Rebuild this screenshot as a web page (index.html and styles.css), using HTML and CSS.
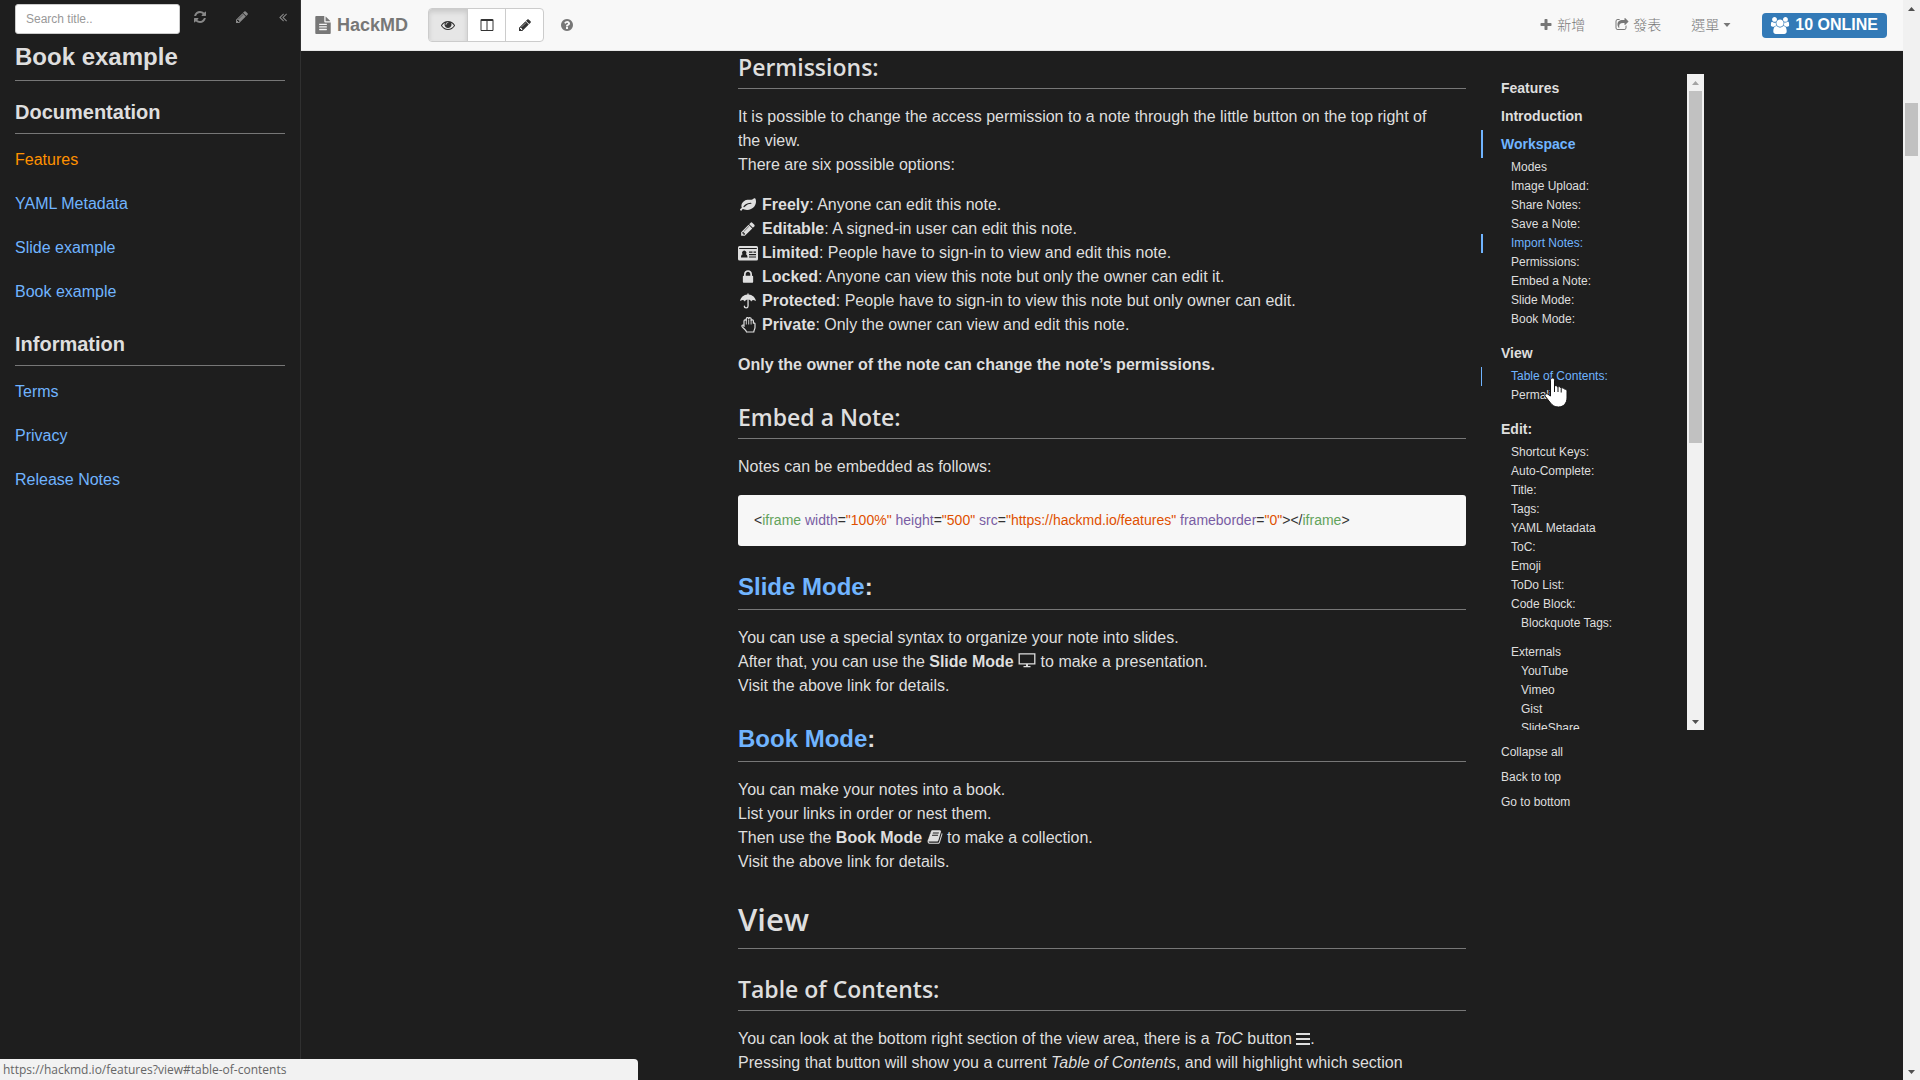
FILE: index.html
```html
<!DOCTYPE html>
<html lang="zh-Hant">
<head>
<meta charset="utf-8">
<meta name="viewport" content="width=device-width, initial-scale=1">
<title>Book example - HackMD</title>
<link rel="stylesheet" href="styles.css">
</head>
<body>
<svg class="sprite" aria-hidden="true">
  <symbol id="i-pencil" viewBox="0 0 1792 1792"><path d="M491 1536l91-91-235-235-91 91v107h128v128h107zm523-928q0-22-22-22-10 0-17 7l-542 542q-7 7-7 17 0 22 22 22 10 0 17-7l542-542q7-7 7-17zm-54-192l416 416-832 832h-416v-416zm683 96q0 53-37 90l-166 166-416-416 166-165q36-38 90-38 53 0 91 38l235 234q37 39 37 91z"/></symbol>
  <symbol id="i-eye" viewBox="0 0 1792 1792"><path d="M1664 960q-152-236-381-353 61 104 61 225 0 185-131.5 316.5t-316.5 131.5-316.5-131.5-131.5-316.5q0-121 61-225-229 117-381 353 133 205 333.5 326.5t434.5 121.5 434.5-121.5 333.5-326.5zm-720-384q0-20-14-34t-34-14q-125 0-214.5 89.5t-89.5 214.5q0 20 14 34t34 14 34-14 14-34q0-86 61-147t147-61q20 0 34-14t14-34zm848 384q0 34-20 69-140 230-376.5 368.5t-499.5 138.5-499.5-139-376.5-368q-20-35-20-69t20-69q140-229 376.5-368t499.5-139 499.5 139 376.5 368q20 35 20 69z"/></symbol>
  <symbol id="i-columns" viewBox="0 0 1792 1792"><path d="M224 1536h608v-1152h-640v1120q0 13 9.5 22.5t22.5 9.5zm1376-32v-1120h-640v1152h608q13 0 22.5-9.5t9.5-22.5zm128-1216v1216q0 66-47 113t-113 47h-1344q-66 0-113-47t-47-113v-1216q0-66 47-113t113-47h1344q66 0 113 47t47 113z"/></symbol>
  <symbol id="i-question" viewBox="0 0 1792 1792"><path d="M1024 1376v-192q0-14-9-23t-23-9h-192q-14 0-23 9t-9 23v192q0 14 9 23t23 9h192q14 0 23-9t9-23zm256-672q0-88-55.5-163t-138.5-116-170-41q-243 0-371 213-15 24 8 42l132 100q7 6 19 6 16 0 25-12 53-68 86-92 34-24 86-24 48 0 85.5 26t37.5 59q0 38-20 61t-68 45q-63 28-115.5 86.5t-52.5 125.5v36q0 14 9 23t23 9h192q14 0 23-9t9-23q0-19 21.5-49.5t54.5-49.5q32-18 49-28.5t46-35 44.5-48 28-60.5 12.5-81zm384 192q0 209-103 385.5t-279.5 279.5-385.5 103-385.5-103-279.5-279.5-103-385.5 103-385.5 279.5-279.5 385.5-103 385.5 103 279.5 279.5 103 385.5z"/></symbol>
  <symbol id="i-file" viewBox="0 0 1792 1792"><path d="M1596 476q14 14 28 36h-472v-472q22 14 36 28zm-476 164h544v1056q0 40-28 68t-68 28h-1344q-40 0-68-28t-28-68v-1600q0-40 28-68t68-28h800v544q0 40 28 68t68 28zm160 736v-64q0-14-9-23t-23-9h-704q-14 0-23 9t-9 23v64q0 14 9 23t23 9h704q14 0 23-9t9-23zm0-256v-64q0-14-9-23t-23-9h-704q-14 0-23 9t-9 23v64q0 14 9 23t23 9h704q14 0 23-9t9-23zm0-256v-64q0-14-9-23t-23-9h-704q-14 0-23 9t-9 23v64q0 14 9 23t23 9h704q14 0 23-9t9-23z"/></symbol>
  <symbol id="i-refresh" viewBox="0 0 1792 1792"><path d="M1639 1056q0 5-1 7-64 268-268 434.5t-478 166.5q-146 0-282.5-55t-243.5-157l-129 129q-19 19-45 19t-45-19-19-45v-448q0-26 19-45t45-19h448q26 0 45 19t19 45-19 45l-137 137q71 66 161 102t187 36q134 0 250-65t186-179q11-17 53-117 8-23 30-23h192q13 0 22.5 9.5t9.5 22.5zm25-800v448q0 26-19 45t-45 19h-448q-26 0-45-19t-19-45 19-45l138-138q-148-137-349-137-134 0-250 65t-186 179q-11 17-53 117-8 23-30 23h-199q-13 0-22.5-9.5t-9.5-22.5v-7q65-268 270-434.5t480-166.5q146 0 284 55.5t245 156.5l130-129q19-19 45-19t45 19 19 45z"/></symbol>
  <symbol id="i-collapse" viewBox="0 0 1792 1792"><path d="M1011 1376q0 13-10 23l-50 50q-10 10-23 10t-23-10l-466-466q-10-10-10-23t10-23l466-466q10-10 23-10t23 10l50 50q10 10 10 23t-10 23l-393 393 393 393q10 10 10 23zm384 0q0 13-10 23l-50 50q-10 10-23 10t-23-10l-466-466q-10-10-10-23t10-23l466-466q10-10 23-10t23 10l50 50q10 10 10 23t-10 23l-393 393 393 393q10 10 10 23z"/></symbol>
  <symbol id="i-plus" viewBox="0 0 1792 1792"><path d="M1600 736v192q0 40-28 68t-68 28h-416v416q0 40-28 68t-68 28h-192q-40 0-68-28t-28-68v-416h-416q-40 0-68-28t-28-68v-192q0-40 28-68t68-28h416v-416q0-40 28-68t68-28h192q40 0 68 28t28 68v416h416q40 0 68 28t28 68z"/></symbol>
  <symbol id="i-share" viewBox="0 0 1792 1792"><path d="M1472 989v259q0 119-84.5 203.5t-203.5 84.5h-832q-119 0-203.5-84.5t-84.5-203.5v-832q0-119 84.5-203.5t203.5-84.5h255q13 0 22.5 9.5t9.5 22.5q0 27-26 32-77 26-133 60-10 4-16 4h-112q-66 0-113 47t-47 113v832q0 66 47 113t113 47h832q66 0 113-47t47-113v-214q0-19 18-29 28-13 54-37 16-16 35-8 21 9 21 29zm237-496l-384 384q-18 19-45 19-12 0-25-5-39-17-39-59v-192h-160q-323 0-438 131-119 137-74 473 3 23-20 34-8 2-12 2-16 0-26-13-10-14-21-31t-39.5-68.5-49.5-99.5-38.5-114-17.5-122q0-49 3.5-91t14-90 28-88 47-81.5 68.5-74 94.5-61.5 124.5-48.5 159.5-30.5 196.5-11h160v-192q0-42 39-59 13-5 25-5 26 0 45 19l384 384q19 19 19 45t-19 45z"/></symbol>
  <symbol id="i-users" viewBox="-64 0 1920 1792"><path d="M529 896q-162 5-265 128h-134q-82 0-138-40.5t-56-118.5q0-353 124-353 6 0 43.5 21t97.5 42.5 119 21.5q67 0 133-23-5 37-5 66 0 159 81 282zm1071 637q0 120-73 189.5t-194 69.5h-874q-121 0-194-69.5t-73-189.5q0-53 3.5-103.5t14-109 26.5-108.5 43-97.5 62-81 85.5-53.5 111.5-20q10 0 43 21.5t73 48 107 48 135 21.5 135-21.5 107-48 73-48 43-21.5q61 0 111.5 20t85.5 53.5 62 81 43 97.5 26.5 108.5 14 109 3.5 103.5zm-1024-1277q0 106-75 181t-181 75-181-75-75-181 75-181 181-75 181 75 75 181zm704 384q0 159-112.5 271.5t-271.5 112.5-271.5-112.5-112.5-271.5 112.5-271.5 271.5-112.5 271.5 112.5 112.5 271.5zm576 225q0 78-56 118.5t-138 40.5h-134q-103-123-265-128 81-123 81-282 0-29-5-66 66 23 133 23 59 0 119-21.5t97.5-42.5 43.5-21q124 0 124 353zm-128-609q0 106-75 181t-181 75-181-75-75-181 75-181 181-75 181 75 75 181z"/></symbol>
  <symbol id="i-leaf" viewBox="0 0 1792 1792"><path d="M1280 704q0-26-19-45t-45-19q-172 0-318 49.5t-259.5 134-235.5 219.5q-19 21-19 45 0 26 19 45t45 19q24 0 45-19 27-24 74-71t67-66q137-124 268.5-176t313.5-52q26 0 45-19t19-45zm512-198q0 95-20 193-46 224-184.5 383t-357.5 268q-214 108-438 108-148 0-286-47-15-5-88-42t-96-37q-16 0-39.5 32t-45 70-52.5 70-60 32q-43 0-63.5-17.5t-45.5-59.5q-2-4-6-11t-5.5-10-3-9.5-1.5-13.5q0-35 31-73.5t68-65.5 68-56 31-48q0-4-14-38t-16-44q-9-51-9-104 0-115 43.5-220t119-184.5 170.5-139 204-95.5q55-18 145-25.5t179.5-9 178.5-6 163.5-24 113.5-56.5l29.5-29.5 29.5-28 27-20 36.5-16 43.5-4.5q39 0 70.5 46t47.5 112 24 124 8 96z"/></symbol>
  <symbol id="i-lock" viewBox="0 0 1792 1792"><path d="M640 768h512v-192q0-106-75-181t-181-75-181 75-75 181v192zm832 96v576q0 40-28 68t-68 28h-960q-40 0-68-28t-28-68v-576q0-40 28-68t68-28h32v-192q0-184 132-316t316-132 316 132 132 316v192h32q40 0 68 28t28 68z"/></symbol>
  <symbol id="i-card" viewBox="0 0 20 16"><path fill-rule="evenodd" d="M1.500 1h17A1.500 1.500 0 0 1 20 2.500v11.500a1.500 1.500 0 0 1-1.500 1.500h-17A1.500 1.500 0 0 1 0 14V2.500A1.500 1.500 0 0 1 1.500 1zM1.200 3v1h17.600V3zM3 12.500h6.500c0-2-.6-3.200-1.700-3.300a2.100 2.100 0 1 0-3.100 0C3.600 9.300 3 10.500 3 12.500zM11 6.500v1.200h3.500V6.500zM15.500 6.500v1.200H18V6.500zM11 9v1.200h7V9zM11 11.500v1h7v-1z"/></symbol>
  <symbol id="i-umbrella" viewBox="0 0 16 16"><path d="M7.400 1.500V.8a.6.600 0 0 1 1.200 0v.7c3.600.2 6.500 2.800 7.200 6 .1.500-.3.600-.6.300-1.200-1.100-2.700-1.100-3.600.2-.3.500-.5.500-.8 0-.5-.9-1.200-1.300-2.100-1.400v6.500a2.500 2.500 0 0 1-5 0c0-.9 1.300-.9 1.300 0a1.200 1.200 0 0 0 2.400 0V6.600c-.9.100-1.700.5-2.200 1.400-.3.500-.5.500-.8 0C3.500 6.700 2 6.700.8 7.800c-.3.300-.7.200-.6-.3C.9 4.300 3.800 1.700 7.400 1.500z"/></symbol>
  <symbol id="i-hand" viewBox="0 0 16 16"><path fill="none" stroke="currentColor" stroke-width="1.200" stroke-linecap="round" stroke-linejoin="round" d="M4 9.500V4a1.200 1.200 0 0 1 2.300-.4V2a1.200 1.200 0 0 1 2.400-.3 1.200 1.200 0 0 1 2.400.5v1.300a1.200 1.200 0 0 1 2.300.4v2.300a1 1 0 0 1 1.600.9v3.400c0 1.500-1.200 2.500-1.200 4.500H6.500c0-1.500-2.200-2.800-4.200-5.200C1.200 8.400 2.800 7.400 4 8.500"/><path fill="none" stroke="currentColor" stroke-width=".9" d="M6.300 3.500v4M8.700 2.500v5M11.100 3.500v4"/></symbol>
  <symbol id="i-desktop" viewBox="0 0 18 16"><path fill="none" stroke="currentColor" stroke-width="1.300" d="M1.200 1.800h15.600v10H1.200z"/><path d="M8 12h2v2.300H8zM5.500 14h7v1.200h-7z"/></symbol>
  <symbol id="i-book" viewBox="0 0 1792 1792"><path d="M1703 478q40 57 18 129l-275 906q-19 64-76.500 107.500t-122.500 43.500h-923q-77 0-148.500-53.500t-99.500-131.500q-24-67-2-127 0-4 3-27t4-37q1-8-3-21.500t-3-19.500q2-11 8-21t16.500-23.500 16.500-23.500q23-38 45-91.500t30-91.500q3-10 .5-30t-.5-28q3-11 17-28t17-23q21-36 42-92t25-90q1-9-2.500-32t.5-28q4-13 22-30.500t22-22.500q19-26 42.500-84.500t27.500-96.500q1-8-3-25.500t-2-26.500q2-8 9-18t18-23 17-21q8-12 16.500-30.500t15-35 16-36 19.500-32 26.500-23.500 36-11.500 47.500 5.500l-1 3q38-9 51-9h761q74 0 114 56t18 130l-274 906q-36 119-71.500 153.500t-128.500 34.500h-869q-27 0-38 15-11 16-1 43 24 70 144 70h923q29 0 56-15.500t35-41.500l300-987q7-22 5-57 38 15 59 43zm-1064 2q-4 13 2 22.500t20 9.500h608q13 0 25.500-9.500t16.500-22.500l21-64q4-13-2-22.500t-20-9.500h-608q-13 0-25.500 9.500t-16.500 22.500zm-83 256q-4 13 2 22.500t20 9.500h608q13 0 25.500-9.500t16.500-22.500l21-64q4-13-2-22.500t-20-9.500h-608q-13 0-25.500 9.500t-16.500 22.500z"/></symbol>
  <symbol id="i-bars" viewBox="0 0 14 14"><path d="M0 1h14v2H0zM0 6h14v2H0zM0 11h14v2H0z"/></symbol>
  <symbol id="i-up" viewBox="0 0 7 4"><path d="M0 4L3.500 0 7 4z"/></symbol>
  <symbol id="i-down" viewBox="0 0 7 4"><path d="M0 0L3.500 4 7 0z"/></symbol>
</svg>

<div class="app">
  <aside class="sidebar">
    <form class="search" role="search">
      <input class="search-input" type="text" placeholder="Search title.." aria-label="Search title">
      <div class="tools">
        <button class="tool" type="button" aria-label="Refresh"><svg class="icon"><use href="#i-refresh"/></svg></button>
        <button class="tool" type="button" aria-label="Edit"><svg class="icon"><use href="#i-pencil"/></svg></button>
        <button class="tool" type="button" aria-label="Collapse"><svg class="icon"><use href="#i-collapse"/></svg></button>
      </div>
    </form>
    <h1 class="book-title">Book example</h1>
    <h2 class="book-section">Documentation</h2>
    <nav class="book-links" aria-label="Documentation">
      <a class="current" href="#features">Features</a>
      <a href="#yaml">YAML Metadata</a>
      <a href="#slide">Slide example</a>
      <a href="#book">Book example</a>
    </nav>
    <h2 class="book-section">Information</h2>
    <nav class="book-links" aria-label="Information">
      <a href="#terms">Terms</a>
      <a href="#privacy">Privacy</a>
      <a href="#release">Release Notes</a>
    </nav>
  </aside>

  <div class="main">
    <header class="navbar">
      <a class="brand" href="#home"><svg class="icon icon-18"><use href="#i-file"/></svg>HackMD</a>
      <div class="modes">
        <button class="mode mode-on" type="button" aria-label="View"><svg class="icon"><use href="#i-eye"/></svg></button>
        <button class="mode" type="button" aria-label="Both"><svg class="icon"><use href="#i-columns"/></svg></button>
        <button class="mode" type="button" aria-label="Edit"><svg class="icon"><use href="#i-pencil"/></svg></button>
      </div>
      <button class="help" type="button" aria-label="Help"><svg class="icon"><use href="#i-question"/></svg></button>
      <nav class="menu">
        <a href="#new"><svg class="icon"><use href="#i-plus"/></svg>新增</a>
        <a href="#publish"><svg class="icon"><use href="#i-share"/></svg>發表</a>
        <a href="#menu">選單<svg class="caret"><use href="#i-down"/></svg></a>
      </nav>
      <button class="online" type="button"><svg class="icon icon-users"><use href="#i-users"/></svg>10 ONLINE</button>
    </header>

    <div class="page">
      <article class="doc">
        <h2>Permissions:</h2>
        <p>It is possible to change the access permission to a note through the little button on the top right of the&nbsp;view.<br>There are six possible options:</p>
        <ul class="options">
          <li><svg class="icon icon-fw"><use href="#i-leaf"/></svg><span><strong>Freely</strong>: Anyone can edit this note.</span></li>
          <li><svg class="icon icon-fw"><use href="#i-pencil"/></svg><span><strong>Editable</strong>: A signed-in user can edit this note.</span></li>
          <li><svg class="icon icon-fw"><use href="#i-card"/></svg><span><strong>Limited</strong>: People have to sign-in to view and edit this note.</span></li>
          <li><svg class="icon icon-fw"><use href="#i-lock"/></svg><span><strong>Locked</strong>: Anyone can view this note but only the owner can edit it.</span></li>
          <li><svg class="icon icon-fw"><use href="#i-umbrella"/></svg><span><strong>Protected</strong>: People have to sign-in to view this note but only owner can edit.</span></li>
          <li><svg class="icon icon-fw"><use href="#i-hand"/></svg><span><strong>Private</strong>: Only the owner can view and edit this note.</span></li>
        </ul>
        <p><strong>Only the owner of the note can change the note’s permissions.</strong></p>

        <h2>Embed a Note:</h2>
        <p>Notes can be embedded as follows:</p>
        <pre><code>&lt;<span class="tag">iframe</span> <span class="attr">width</span>=<span class="str">"100%"</span> <span class="attr">height</span>=<span class="str">"500"</span> <span class="attr">src</span>=<span class="str">"https://hackmd.io/features"</span> <span class="attr">frameborder</span>=<span class="str">"0"</span>&gt;&lt;/<span class="tag">iframe</span>&gt;</code></pre>

        <h2 class="linked"><a href="#slide-mode">Slide Mode</a>:</h2>
        <p>You can use a special syntax to organize your note into slides.<br>After that, you can use the <strong>Slide Mode</strong> <svg class="icon icon-18 inline"><use href="#i-desktop"/></svg> to make a presentation.<br>Visit the above link for details.</p>

        <h2 class="linked"><a href="#book-mode">Book Mode</a>:</h2>
        <p>You can make your notes into a book.<br>List your links in order or nest them.<br>Then use the <strong>Book Mode</strong> <svg class="icon icon-16 inline"><use href="#i-book"/></svg> to make a collection.<br>Visit the above link for details.</p>

        <h1>View</h1>
        <h2>Table of Contents:</h2>
        <p>You can look at the bottom right section of the view area, there is a <em>ToC</em> button <svg class="icon inline"><use href="#i-bars"/></svg>.<br>Pressing that button will show you a current <em>Table of Contents</em>, and will highlight which section</p>
      </article>

      <aside class="toc">
        <div class="toc-box">
          <ul class="toc-list">
            <li><a href="#t1">Features</a></li>
            <li><a href="#t2">Introduction</a></li>
            <li><a class="active" href="#t3">Workspace</a>
              <ul>
                <li><a href="#t4">Modes</a></li>
                <li><a href="#t5">Image Upload:</a></li>
                <li><a href="#t6">Share Notes:</a></li>
                <li><a href="#t7">Save a Note:</a></li>
                <li><a class="active" href="#t8">Import Notes:</a></li>
                <li><a href="#t9">Permissions:</a></li>
                <li><a href="#t10">Embed a Note:</a></li>
                <li><a href="#t11">Slide Mode:</a></li>
                <li><a href="#t12">Book Mode:</a></li>
              </ul>
            </li>
            <li><a href="#t13">View</a>
              <ul>
                <li class="pointed"><a class="hover" href="#table-of-contents">Table of Contents:</a>
                  <svg class="cursor" viewBox="0 0 24 31" aria-hidden="true"><path d="M8.500 1c1.500 0 2 1 2 2.200V9c.6-.6 3-.6 3.200 1 1-.8 3-.4 3.300 1.200 1-.8 3-.3 3.600 1 1.400-.3 2.400.5 2.400 2V21c0 5-3.500 9-8.500 9-4 0-6-1.500-8-4L1.200 19.200c-1.200-1.500.6-3 2.300-2.200L6.500 19V3.200C6.500 2 7 1 8.500 1z" fill="#fff" stroke="#111" stroke-width="1"/><path d="M10.500 9v6M14 10v5M17.200 11.500V15.500" stroke="#111" fill="none"/></svg>
                </li>
                <li><a href="#t15">Permalink</a></li>
              </ul>
            </li>
            <li><a href="#t16">Edit:</a>
              <ul>
                <li><a href="#t17">Shortcut Keys:</a></li>
                <li><a href="#t18">Auto-Complete:</a></li>
                <li><a href="#t19">Title:</a></li>
                <li><a href="#t20">Tags:</a></li>
                <li><a href="#t21">YAML Metadata</a></li>
                <li><a href="#t22">ToC:</a></li>
                <li><a href="#t23">Emoji</a></li>
                <li><a href="#t24">ToDo List:</a></li>
                <li><a href="#t25">Code Block:</a>
                  <ul><li><a href="#t26">Blockquote Tags:</a></li></ul>
                </li>
                <li><a href="#t27">Externals</a>
                  <ul>
                    <li><a href="#t28">YouTube</a></li>
                    <li><a href="#t29">Vimeo</a></li>
                    <li><a href="#t30">Gist</a></li>
                    <li><a href="#t31">SlideShare</a></li>
                  </ul>
                </li>
              </ul>
            </li>
          </ul>
          <div class="scrollbar at-top" aria-hidden="true">
            <svg class="arrow"><use href="#i-up"/></svg>
            <div class="track"><div class="thumb toc-thumb"></div></div>
            <svg class="arrow"><use href="#i-down"/></svg>
          </div>
        </div>
        <div class="toc-actions">
          <a href="#collapse">Collapse all</a>
          <a href="#top">Back to top</a>
          <a href="#bottom">Go to bottom</a>
        </div>
      </aside>
    </div>
  </div>

  <div class="scrollbar" aria-hidden="true">
    <svg class="arrow"><use href="#i-up"/></svg>
    <div class="track"><div class="thumb page-thumb"></div></div>
    <svg class="arrow"><use href="#i-down"/></svg>
  </div>
</div>
<div class="status">https://hackmd.io/features?view#table-of-contents</div>
</body>
</html>
```
FILE: styles.css
```css
* { box-sizing: border-box; }

body {
  margin: 0;
  background: #1e1e1e;
  color: #dedede;
  font: 16px/24px "Liberation Sans", Arial, "Noto Sans CJK TC", sans-serif;
}

a { color: #70b4ff; text-decoration: none; }
ul { list-style: none; margin: 0; padding: 0; }
button { border: 0; background: none; padding: 0; font: inherit; color: inherit; }

.sprite { display: none; }
.icon { width: 14px; height: 14px; fill: currentColor; flex: none; }
.icon-16 { width: 16px; height: 16px; }
.icon-18 { width: 18px; height: 18px; }
.icon-fw { width: 20px; height: 16px; }
.icon-users { width: 20px; height: 17px; }
.inline { vertical-align: -2px; }

.app { display: flex; height: 100vh; overflow: hidden; }

/* Sidebar */
.sidebar {
  flex: 0 0 301px;
  min-width: 0;
  padding: 4px 15px 0;
  border-right: 1px solid #303030;
}
.search { display: flex; height: 30px; margin-right: -5px; }
.search-input {
  flex: none;
  width: 165px;
  height: 30px;
  padding: 5px 10px;
  border: 1px solid #ccc;
  border-radius: 3px;
  background: #fff;
  font: 12px/18px "Liberation Sans", Arial, sans-serif;
}
.search-input::placeholder { color: #999; }
.tools { flex: 1; display: flex; justify-content: space-between; align-items: center; padding: 0 0 4px 13px; }
.tool { display: flex; color: #888; }
.book-title, .book-section { border-bottom: 1px solid #777; margin: 0; }
.book-title { margin-top: 8px; padding-bottom: 8px; font-size: 24px; line-height: 30px; }
.book-section { margin-top: 19px; padding-bottom: 9px; font-size: 20px; line-height: 24px; }
.book-links { display: flex; flex-direction: column; gap: 20px; margin: 14px 0 28px; }
.book-links .current { color: #ff9100; }

/* Top bar */
.main { flex: 1; min-width: 0; display: flex; flex-direction: column; }
.navbar {
  flex: none;
  display: flex;
  align-items: center;
  height: 51px;
  padding: 0 16px 0 13px;
  background: #f8f8f8;
  border-bottom: 1px solid #e7e7e7;
  color: #777;
}
.brand { display: flex; align-items: center; gap: 5px; color: #777; font-size: 18px; font-weight: bold; }
.modes { display: flex; margin-left: 20px; border: 1px solid #ccc; border-radius: 4px; background: #fff; overflow: hidden; }
.mode { display: flex; align-items: center; justify-content: center; width: 38px; height: 32px; color: #333; }
.mode + .mode { border-left: 1px solid #ccc; }
.mode-on { background: #e6e6e6; box-shadow: inset 0 3px 5px #00000020; }
.help { display: flex; margin-left: 16px; }
.menu { display: flex; gap: 30px; margin-left: auto; font-size: 14px; font-weight: 300; }
.menu a { display: flex; align-items: center; gap: 4px; color: #777; }
.caret { width: 8px; height: 4px; fill: currentColor; }
.online {
  display: flex;
  align-items: center;
  gap: 5px;
  height: 25px;
  margin-left: 31px;
  padding: 0 9px 0 8px;
  border-radius: 4px;
  background: #337ab7;
  color: #fff;
  font-weight: bold;
}

/* Document column with the contents list to its right */
.page {
  flex: 1;
  min-height: 0;
  overflow: hidden;
  display: grid;
  grid-template-columns: 1fr minmax(0, 728px) 1fr;
}
.doc { grid-column: 2; }
.doc h1, .doc h2 {
  margin: 24px 0 16px;
  border-bottom: 1px solid #777;
  font-family: "Open Sans", "Noto Sans", sans-serif;
  font-weight: 600;
}
.doc h1 { padding-bottom: 8px; font-size: 31px; line-height: 42px; }
.doc h2 { padding-bottom: 5px; font-size: 23px; line-height: 32px; }
.doc h2:first-child { margin-top: 0; }
.doc .linked { font-family: "Liberation Sans", Arial, sans-serif; font-size: 24px; font-weight: bold; line-height: 34px; }
.doc p { margin: 0 0 16px; }
.options { margin-bottom: 16px; }
.options li { display: flex; align-items: center; gap: 4px; }
pre {
  margin: 0 0 16px;
  padding: 16px;
  border-radius: 3px;
  background: #f7f7f7;
  color: #333;
  font: 14px/19px "Liberation Sans", Arial, sans-serif;
}
code { font: inherit; }
.tag { color: #63a35c; }
.attr { color: #795da3; }
.str { color: #df5000; }

/* Contents list */
.toc { width: 223px; margin: 23px 0 0 15px; font-size: 12px; }
.toc a { color: #dedede; }
.toc-box { display: flex; height: 656px; overflow: hidden; }
.toc-list { flex: 1; }
.toc-list a { display: block; padding-left: 20px; font-size: 14px; line-height: 28px; font-weight: bold; }
.toc-list ul { padding-bottom: 10px; }
.toc-list ul a { padding-left: 30px; font-size: 12px; line-height: 19px; font-weight: 500; }
.toc-list ul ul a { padding-left: 40px; }
.toc-list .active { color: #70b4ff; box-shadow: inset 2px 0 #70b4ff; }
.toc-list .hover { color: #70b4ff; box-shadow: inset 1px 0 #70b4ff; }
.pointed { position: relative; }
.cursor { position: absolute; left: 63px; top: 10px; width: 24px; height: 31px; }
.toc-actions { display: flex; flex-direction: column; gap: 8px; padding: 14px 20px; line-height: 17px; }

/* Scroll bars */
.scrollbar {
  flex: 0 0 17px;
  display: flex;
  flex-direction: column;
  align-items: center;
  background: #f1f1f1;
}
.arrow { flex: none; width: 7px; height: 4px; margin: 7px 0 6px; fill: #505050; }
.at-top .arrow:first-child { fill: #a3a3a3; }
.track { flex: 1; width: 13px; }
.thumb { background: #c1c1c1; }
.toc-thumb { height: 352px; }
.page-thumb { height: 53px; margin-top: 86px; }

/* Link address shown by the browser */
.status {
  position: fixed;
  left: 0;
  bottom: 0;
  width: 638px;
  padding: 0 3px;
  border-radius: 0 4px 0 0;
  background: #f2f2f2;
  color: #666;
  font: 12px/21px "Open Sans", "Noto Sans", sans-serif;
}
```
